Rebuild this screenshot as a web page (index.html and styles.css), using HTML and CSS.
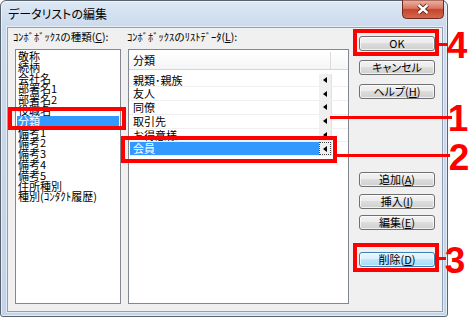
FILE: index.html
```html
<!DOCTYPE html>
<html lang="ja">
<head>
<meta charset="utf-8">
<title>データリストの編集</title>
<link rel="stylesheet" href="styles.css">
</head>
<body>
<div class="stage">
  <div class="window">
    <div class="titlebar">
      <span class="title">データリストの編集</span>
      <div class="close">
        <svg width="42" height="19" viewBox="0 0 42 19">
          <defs>
            <linearGradient id="cg" x1="0" y1="0" x2="0" y2="1">
              <stop offset="0" stop-color="#ecb5a8"/>
              <stop offset="0.45" stop-color="#da7560"/>
              <stop offset="0.52" stop-color="#c6442c"/>
              <stop offset="1" stop-color="#d46a52"/>
            </linearGradient>
          </defs>
          <path d="M0.5 0 H41.5 V14.5 Q41.5 18.5 37.5 18.5 H4.5 Q0.5 18.5 0.5 14.5 Z" fill="url(#cg)" stroke="#6e2a1e"/>
          <path d="M16.5 5 L25.5 13 M25.5 5 L16.5 13" stroke="#4a1a12" stroke-width="4.2"/>
          <path d="M16.5 5 L25.5 13 M25.5 5 L16.5 13" stroke="#ffffff" stroke-width="2.4"/>
        </svg>
      </div>
    </div>
    <div class="client">
      <div class="col col-left">
        <div class="label">ｺﾝﾎﾞﾎﾞｯｸｽの種類(<u>C</u>):</div>
        <div class="listbox">
          <div class="item">敬称</div>
          <div class="item">続柄</div>
          <div class="item">会社名</div>
          <div class="item">部署名1</div>
          <div class="item">部署名2</div>
          <div class="item">役職名</div>
          <div class="item selected">分類</div>
          <div class="item">備考1</div>
          <div class="item">備考2</div>
          <div class="item">備考3</div>
          <div class="item">備考4</div>
          <div class="item">備考5</div>
          <div class="item">住所種別</div>
          <div class="item">種別(ｺﾝﾀｸﾄ履歴)</div>
        </div>
      </div>
      <div class="col col-right">
        <div class="label">ｺﾝﾎﾞﾎﾞｯｸｽのﾘｽﾄﾃﾞｰﾀ(<u>L</u>):</div>
        <div class="grid">
          <div class="grid-head">
            <div class="head-main">分類</div>
            <div class="head-rest"></div>
          </div>
          <div class="rows">
            <div class="row"><div class="cell">親類･親族</div><div class="bc"><span class="tri"></span></div><div class="rest"></div></div>
            <div class="row"><div class="cell">友人</div><div class="bc"><span class="tri"></span></div><div class="rest"></div></div>
            <div class="row"><div class="cell">同僚</div><div class="bc"><span class="tri"></span></div><div class="rest"></div></div>
            <div class="row"><div class="cell">取引先</div><div class="bc"><span class="tri"></span></div><div class="rest"></div></div>
            <div class="row"><div class="cell">お得意様</div><div class="bc"><span class="tri"></span></div><div class="rest"></div></div>
            <div class="row selected"><div class="cell">会員</div><div class="bc"><span class="tri"></span></div><div class="rest"></div></div>
          </div>
        </div>
      </div>
      <div class="buttons">
        <div class="group group-top">
          <div class="btn">OK</div>
          <div class="btn">キャンセル</div>
          <div class="btn">ヘルプ(<u>H</u>)</div>
        </div>
        <div class="group group-mid">
          <div class="btn">追加(<u>A</u>)</div>
          <div class="btn">挿入(<u>I</u>)</div>
          <div class="btn">編集(<u>E</u>)</div>
        </div>
        <div class="group group-bottom">
          <div class="btn btn-default">削除(<u>D</u>)</div>
        </div>
      </div>
    </div>
  </div>

  <div class="annot box box1"></div>
  <div class="annot line line1"></div>
  <div class="annot digit digit1">1</div>

  <div class="annot box box2"></div>
  <div class="annot line line2"></div>
  <div class="annot digit digit2">2</div>

  <div class="annot box box3"></div>
  <div class="annot line line3"></div>
  <div class="annot digit digit3">3</div>

  <div class="annot box box4"></div>
  <div class="annot line line4"></div>
  <div class="annot digit digit4">4</div>
</div>
</body>
</html>
```

FILE: styles.css
```css
* { box-sizing: border-box; }
html, body { margin: 0; padding: 0; background: #ffffff; }
body {
  width: 470px;
  height: 318px;
  overflow: hidden;
  font-family: "Noto Sans CJK JP", "Noto Sans", sans-serif;
  color: #000;
}
u { text-decoration: underline; text-underline-offset: 1px; }

.stage { position: relative; width: 470px; height: 318px; }

/* window frame */
.window {
  width: 448px;
  height: 317px;
  border: 1px solid #59636f;
  border-radius: 6px 6px 3px 3px;
  background: linear-gradient(#dde8f5 0, #cbdaec 26px, #c3d4e8 100%);
  box-shadow: inset 0 0 0 1px rgba(255,255,255,0.55);
  display: flex;
  flex-direction: column;
}
.titlebar {
  flex: none;
  height: 26px;
  display: flex;
  justify-content: space-between;
  align-items: flex-start;
}
.title {
  font-size: 12px;
  line-height: 14px;
  padding: 6px 0 0 7px;
  font-feature-settings: "palt";
}
.close { width: 42px; height: 19px; margin: -1px 3px 0 0; }
.close svg { display: block; }

.client {
  flex: none;
  height: 285px;
  margin: 0 4px 0 6px;
  border: 1px solid #8e9eb4;
  box-shadow: 0 0 0 1px rgba(255,255,255,0.5);
  background: #f0f0f0;
  display: flex;
  align-items: flex-start;
  padding: 2px 0 0 5px;
}

.label {
  font-size: 10.5px;
  line-height: 14px;
  height: 14px;
  margin-bottom: 5px;
  white-space: nowrap;
}

/* left list */
.col-left { width: 108px; }
.listbox {
  margin-left: 2px;
  width: 106px;
  height: 255px;
  border: 1px solid #828790;
  background: #fff;
  padding: 1px;
}
.item {
  height: 10.8px;
  line-height: 10.8px;
  font-size: 11px;
  padding-left: 1px;
  white-space: nowrap;
}
.item.selected { background: #3399ff; color: #fff; }

/* right grid */
.col-right { margin-left: 6px; }
.grid {
  margin-left: 1px;
  width: 221px;
  height: 255px;
  border: 1px solid #828790;
  background: #fff;
  padding-top: 2px;
}
.grid-head {
  display: flex;
  height: 18px;
  border-bottom: 1px solid #d5d5d5;
  background: linear-gradient(#ffffff, #f4f5f6);
}
.head-main {
  width: 202px;
  border-right: 1px solid #dcdcdc;
  font-size: 11px;
  line-height: 17px;
  padding-left: 4px;
}
.head-rest { flex: 1; }
.rows { margin-top: 3.5px; }
.row {
  display: flex;
  height: 13.8px;
  border-bottom: 1px solid #efefef;
}
.cell {
  margin-left: 1px;
  width: 189px;
  padding-left: 3px;
  font-size: 11px;
  line-height: 13px;
  white-space: nowrap;
}
.bc {
  width: 12px;
  background: #f0f0f0;
  display: flex;
  align-items: center;
  justify-content: center;
}
.tri {
  width: 0;
  height: 0;
  border-right: 4px solid #000;
  border-top: 3px solid transparent;
  border-bottom: 3px solid transparent;
}
.rest { flex: 1; border-left: 1px solid #e0e0e0; }
.row.selected .cell { background: #3399ff; color: #fff; }
.row.selected .bc { outline: 1px dotted #444; outline-offset: -1px; }

/* buttons */
.buttons { margin-left: 10px; width: 76px; margin-top: 6px; }
.group { display: flex; flex-direction: column; }
.group-top { gap: 9px; }
.group-mid { gap: 6.5px; margin-top: 73px; }
.group-bottom { margin-top: 22px; }
.btn {
  height: 15px;
  border: 1px solid #707070;
  border-radius: 3px;
  background: linear-gradient(#f2f2f2 0%, #ebebeb 49%, #dddddd 50%, #cfcfcf 100%);
  box-shadow: inset 0 0 0 1px rgba(255,255,255,0.7);
  font-size: 11px;
  line-height: 13px;
  text-align: center;
  font-feature-settings: "palt";
  white-space: nowrap;
}
.btn-default {
  border-color: #3c7fb1;
  background: linear-gradient(#eaf6fd 0%, #d9f0fc 49%, #bee6fd 50%, #a7d9f5 100%);
}

/* red annotations (overlay) */
.annot { position: absolute; }
.box { border: 4px solid #ff0000; }
.line { background: #ff0000; height: 3px; }
.digit {
  font-family: "Liberation Sans", Arial, sans-serif;
  font-weight: bold;
  font-size: 37px;
  line-height: 37px;
  color: #ff0000;
  width: 24px;
  text-align: center;
}
.box1 { left: 8px; top: 107px; width: 118px; height: 23px; }
.line1 { left: 330px; top: 116px; width: 122px; }
.digit1 { left: 446px; top: 100px; }

.box2 { left: 121px; top: 136px; width: 216px; height: 27px; }
.line2 { left: 337px; top: 154px; width: 113px; }
.digit2 { left: 447px; top: 139px; }

.box3 { left: 353px; top: 243px; width: 86px; height: 29px; }
.line3 { left: 439px; top: 257px; width: 7px; }
.digit3 { left: 443px; top: 242px; }

.box4 { left: 353px; top: 29px; width: 86px; height: 27px; }
.line4 { left: 439px; top: 43px; width: 9px; }
.digit4 { left: 445px; top: 27px; }
```
